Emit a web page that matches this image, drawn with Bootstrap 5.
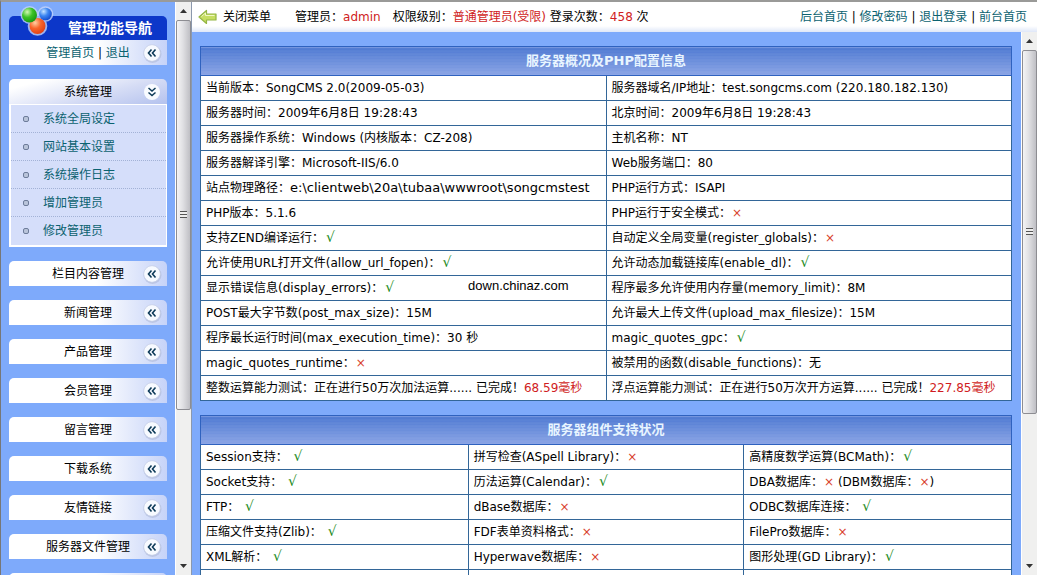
<!DOCTYPE html>
<html lang="zh-CN">
<head>
<meta charset="utf-8">
<meta name="viewport" content="width=device-width, initial-scale=1">
<title>SongCMS 管理中心</title>
<link href="https://cdn.jsdelivr.net/npm/bootstrap@5.3.0/dist/css/bootstrap.min.css" rel="stylesheet">
<style>
  body { font: 12px/18px "DejaVu Sans", "Noto Sans CJK SC", sans-serif; color: #000; background: #7eaafb; border-top: 2px solid #9a9a98; border-left: 1px solid #777; }
  a { color: #0b6270; text-decoration: none; }
  a:hover { color: #c00; }
  .side-menu { width: 174px; padding: 3px 8px 0; overflow: hidden; }
  .menu-head { background: #0c37c9; color: #fff; height: 24px; border-radius: 5px 5px 0 0; font-size: 14px; font-weight: bold; margin-top: 11px; padding-right: 15px; }
  .brand-mark { left: 10px; top: -12px; }
  .menu-bar { height: 25px; padding: 0 4px 0 26px; border: 0; color: #000; background: linear-gradient(90deg, #fff 55%, #c6d3f8); border-radius: 5px 5px 0 0; }
  .menu-bar.first-bar { border-radius: 0; }
  .menu-bar.opened { background: linear-gradient(165deg, #fff 15%, #d5dcf5 60%, #b4c2ee); }
  .menu-bar svg { width: 22px; height: 22px; }
  .menu-stack { gap: 14px; margin-top: 14px; }
  .sub-menu { background: #d5defa; border: solid #fff; border-width: 1px 1px 2px 2px; }
  .sub-menu li { height: 28px; padding-left: 12px; gap: 14px; border-bottom: 1px dotted #a3b2d6; }
  .sub-menu li:last-child { border-bottom: 0; }
  .sub-menu i { width: 6px; height: 6px; border: 1px solid #6d7c9a; border-radius: 2px; background: #b9c4da; }
  .scroll-track { width: 16px; background: #f0f0ef; border-left: 1px solid #fff; }
  .scroll-track svg { width: 7px; height: 4px; fill: #333; }
  .scroll-cap { height: 18px; }
  .scroll-thumb { border: 1px solid #8d8d92; border-radius: 2px; background: linear-gradient(90deg, #f4f4f5, #e0e0e3 45%, #bfbfc4); }
  .side-scroll .scroll-thumb { flex: 0 1 68%; }
  .main-scroll .scroll-thumb { flex: 0 1 67%; }
  .scroll-grip { width: 7px; height: 7px; background: repeating-linear-gradient(#555 0 1px, #eee 1px 3px); }
  .frame-edge { border-left: 1px solid #8b98ad; }
  .top-bar { height: 30px; padding: 0 10px 0 6px; background: linear-gradient(#fff 80%, #dfe7f8); }
  .top-bar .hot, .info-table .hot { color: #d01c22; }
  .top-tool { padding: 0; border: 0; background: none; color: #000; gap: 6px; }
  .content-pad { padding: 14px 9px 0 8px; overflow: hidden; }
  .info-table { border-collapse: collapse; table-layout: fixed; margin-bottom: 14px; background: #fff; }
  .info-table th { height: 29px; padding: 0; text-align: center; font-size: 13px; color: #e8f5ff; border: 1px solid #2f62bf; background: repeating-linear-gradient(rgba(255,255,255,.06) 0 1px, transparent 1px 3px), linear-gradient(#4e79d2, #8aa4e5); }
  .info-table td { height: 25px; padding: 0 5px; border: 1px solid #336698; white-space: nowrap; }
  .yes { color: #1a8a1a; font-size: 14px; line-height: 16px; padding-left: 2px; }
  .no { color: #d8402c; padding-left: 1px; }
  .file-path { font-size: 13px; }
  .third { width: 33%; }
  .third-mid { width: 34%; }
  .site-stamp { font: 13px/18px "Liberation Sans", sans-serif; right: 37px; top: 1px; }
</style>
</head>
<body class="vh-100 overflow-hidden d-flex">
<svg class="d-none" xmlns="http://www.w3.org/2000/svg">
  <symbol id="fold" viewBox="0 0 22 22"><circle cx="11.5" cy="12" r="9" fill="#a9b5d6" opacity=".55"/><circle cx="11" cy="11" r="8.3" fill="#f7faff" stroke="#c3cce4" stroke-width=".7"/><path d="M10.500 7.500 7.500 11l3 3.500M14.500 7.500l-3 3.500 3 3.500" fill="none" stroke="#0d3a58" stroke-width="1.600"/></symbol>
  <symbol id="unfold" viewBox="0 0 22 22"><circle cx="11" cy="11" r="8" fill="#f9fbff"/><path d="M7.500 7l3.500 3 3.500-3M7.500 11.500l3.500 3 3.500-3" fill="none" stroke="#0d3a58" stroke-width="1.500"/></symbol>
  <symbol id="up" viewBox="0 0 7 4"><path d="M0 4 3.500 0 7 4z"/></symbol>
  <symbol id="down" viewBox="0 0 7 4"><path d="M0 0h7L3.500 4z"/></symbol>
</svg>

<aside class="side-menu flex-shrink-0">
  <div class="menu-head position-relative d-flex align-items-center justify-content-end">
    <svg class="brand-mark position-absolute" width="36" height="34" viewBox="0 0 36 34" aria-hidden="true">
      <defs>
        <radialGradient id="g1" cx=".35" cy=".3" r=".8"><stop offset="0" stop-color="#d4f8b4"/><stop offset=".45" stop-color="#3cc227"/><stop offset="1" stop-color="#12900f"/></radialGradient>
        <radialGradient id="g2" cx=".35" cy=".3" r=".8"><stop offset="0" stop-color="#c6e4ff"/><stop offset=".45" stop-color="#3c86f2"/><stop offset="1" stop-color="#0d41c8"/></radialGradient>
        <radialGradient id="g3" cx=".35" cy=".3" r=".8"><stop offset="0" stop-color="#ffd0a4"/><stop offset=".45" stop-color="#f9652a"/><stop offset="1" stop-color="#dc3a10"/></radialGradient>
      </defs>
      <g fill="#c3d4fb" opacity=".8"><circle cx="10.500" cy="11" r="9"/><circle cx="26.500" cy="10" r="7.800"/><circle cx="18.500" cy="22" r="9.800"/></g>
      <circle cx="18.500" cy="22" r="8" fill="url(#g3)"/><circle cx="10.500" cy="11" r="7.500" fill="url(#g1)"/><circle cx="26.500" cy="10" r="6.300" fill="url(#g2)"/>
    </svg>
    管理功能导航
  </div>
  <div class="menu-bar first-bar d-flex align-items-center">
    <span class="flex-fill text-center"><a href="#">管理首页</a> | <a href="#">退出</a></span><svg><use href="#fold"/></svg>
  </div>
  <nav class="menu-stack d-flex flex-column">
    <div>
      <button type="button" class="menu-bar opened w-100 d-flex align-items-center"><span class="flex-fill">系统管理</span><svg><use href="#unfold"/></svg></button>
      <ul class="sub-menu list-unstyled mb-0">
        <li class="d-flex align-items-center"><i></i><a href="#">系统全局设定</a></li>
        <li class="d-flex align-items-center"><i></i><a href="#">网站基本设置</a></li>
        <li class="d-flex align-items-center"><i></i><a href="#">系统操作日志</a></li>
        <li class="d-flex align-items-center"><i></i><a href="#">增加管理员</a></li>
        <li class="d-flex align-items-center"><i></i><a href="#">修改管理员</a></li>
      </ul>
    </div>
    <button type="button" class="menu-bar d-flex align-items-center"><span class="flex-fill">栏目内容管理</span><svg><use href="#fold"/></svg></button>
    <button type="button" class="menu-bar d-flex align-items-center"><span class="flex-fill">新闻管理</span><svg><use href="#fold"/></svg></button>
    <button type="button" class="menu-bar d-flex align-items-center"><span class="flex-fill">产品管理</span><svg><use href="#fold"/></svg></button>
    <button type="button" class="menu-bar d-flex align-items-center"><span class="flex-fill">会员管理</span><svg><use href="#fold"/></svg></button>
    <button type="button" class="menu-bar d-flex align-items-center"><span class="flex-fill">留言管理</span><svg><use href="#fold"/></svg></button>
    <button type="button" class="menu-bar d-flex align-items-center"><span class="flex-fill">下载系统</span><svg><use href="#fold"/></svg></button>
    <button type="button" class="menu-bar d-flex align-items-center"><span class="flex-fill">友情链接</span><svg><use href="#fold"/></svg></button>
    <button type="button" class="menu-bar d-flex align-items-center"><span class="flex-fill">服务器文件管理</span><svg><use href="#fold"/></svg></button>
    <div class="menu-bar"></div>
  </nav>
</aside>

<div class="scroll-track side-scroll flex-shrink-0 d-flex flex-column" aria-hidden="true">
  <div class="scroll-cap d-flex align-items-center justify-content-center"><svg><use href="#up"/></svg></div>
  <div class="scroll-thumb d-flex align-items-center justify-content-center"><div class="scroll-grip"></div></div>
  <div class="scroll-cap mt-auto d-flex align-items-center justify-content-center"><svg><use href="#down"/></svg></div>
</div>

<div class="frame-edge flex-fill d-flex flex-column overflow-hidden">
  <header class="top-bar flex-shrink-0 d-flex align-items-center">
    <button type="button" class="top-tool d-flex align-items-center">
      <svg width="19" height="16" viewBox="0 0 19 16"><path d="M1 8 8.500 1.500V5H18v6H8.500v3.500z" fill="#c6de62" stroke="#94b544" stroke-width="1.200" stroke-linejoin="round"/><path d="M3.500 7.500 7.500 4v2.500h9" fill="none" stroke="#f1f8c4"/></svg>
      关闭菜单
    </button>
    <span class="ms-4">管理员：<span class="hot">admin</span></span>
    <span class="ms-2 ps-1">权限级别：<span class="hot">普通管理员(受限)</span> 登录次数：<span class="hot">458</span> 次</span>
    <nav class="ms-auto"><a href="#">后台首页</a> | <a href="#">修改密码</a> | <a href="#">退出登录</a> | <a href="#">前台首页</a></nav>
  </header>
  <div class="flex-fill d-flex overflow-hidden">
    <main class="content-pad flex-fill">
      <table class="info-table w-100">
        <thead><tr><th colspan="2">服务器概况及PHP配置信息</th></tr></thead>
        <tbody>
          <tr><td>当前版本：SongCMS 2.0(2009-05-03)</td><td>服务器域名/IP地址：test.songcms.com (220.180.182.130)</td></tr>
          <tr><td>服务器时间：2009年6月8日 19:28:43</td><td>北京时间：2009年6月8日 19:28:43</td></tr>
          <tr><td>服务器操作系统：Windows (内核版本：CZ-208)</td><td>主机名称：NT</td></tr>
          <tr><td>服务器解译引擎：Microsoft-IIS/6.0</td><td>Web服务端口：80</td></tr>
          <tr><td>站点物理路径：<span class="file-path">e:\clientweb\20a\tubaa\wwwroot\songcmstest</span></td><td>PHP运行方式：ISAPI</td></tr>
          <tr><td>PHP版本：5.1.6</td><td>PHP运行于安全模式：<span class="no">×</span></td></tr>
          <tr><td>支持ZEND编译运行：<span class="yes">√</span></td><td>自动定义全局变量(register_globals)：<span class="no">×</span></td></tr>
          <tr><td>允许使用URL打开文件(allow_url_fopen)：<span class="yes">√</span></td><td>允许动态加载链接库(enable_dl)：<span class="yes">√</span></td></tr>
          <tr><td class="position-relative">显示错误信息(display_errors)：<span class="yes">√</span><span class="site-stamp position-absolute">down.chinaz.com</span></td><td>程序最多允许使用内存量(memory_limit)：8M</td></tr>
          <tr><td>POST最大字节数(post_max_size)：15M</td><td>允许最大上传文件(upload_max_filesize)：15M</td></tr>
          <tr><td>程序最长运行时间(max_execution_time)：30 秒</td><td>magic_quotes_gpc：<span class="yes">√</span></td></tr>
          <tr><td>magic_quotes_runtime：<span class="no">×</span></td><td>被禁用的函数(disable_functions)：无</td></tr>
          <tr><td>整数运算能力测试：正在进行50万次加法运算...... 已完成！<span class="hot">68.59毫秒</span></td><td>浮点运算能力测试：正在进行50万次开方运算...... 已完成！<span class="hot">227.85毫秒</span></td></tr>
        </tbody>
      </table>
      <table class="info-table w-100">
        <colgroup><col class="third"><col class="third-mid"><col class="third"></colgroup>
        <thead><tr><th colspan="3">服务器组件支持状况</th></tr></thead>
        <tbody>
          <tr><td>Session支持： <span class="yes">√</span></td><td>拼写检查(ASpell Library)：<span class="no">×</span></td><td>高精度数学运算(BCMath)：<span class="yes">√</span></td></tr>
          <tr><td>Socket支持： <span class="yes">√</span></td><td>历法运算(Calendar)：<span class="yes">√</span></td><td>DBA数据库：<span class="no">×</span> (DBM数据库：<span class="no">×</span>)</td></tr>
          <tr><td>FTP： <span class="yes">√</span></td><td>dBase数据库：<span class="no">×</span></td><td>ODBC数据库连接： <span class="yes">√</span></td></tr>
          <tr><td>压缩文件支持(Zlib)： <span class="yes">√</span></td><td>FDF表单资料格式：<span class="no">×</span></td><td>FilePro数据库：<span class="no">×</span></td></tr>
          <tr><td>XML解析： <span class="yes">√</span></td><td>Hyperwave数据库：<span class="no">×</span></td><td>图形处理(GD Library)：<span class="yes">√</span></td></tr>
          <tr><td></td><td></td><td></td></tr>
        </tbody>
      </table>
    </main>
    <div class="scroll-track main-scroll flex-shrink-0 d-flex flex-column" aria-hidden="true">
      <div class="scroll-cap d-flex align-items-center justify-content-center"><svg><use href="#up"/></svg></div>
      <div class="scroll-thumb d-flex align-items-center justify-content-center"><div class="scroll-grip"></div></div>
      <div class="scroll-cap mt-auto d-flex align-items-center justify-content-center"><svg><use href="#down"/></svg></div>
    </div>
  </div>
</div>
<script src="https://cdn.jsdelivr.net/npm/bootstrap@5.3.0/dist/js/bootstrap.bundle.min.js"></script>
</body>
</html>
